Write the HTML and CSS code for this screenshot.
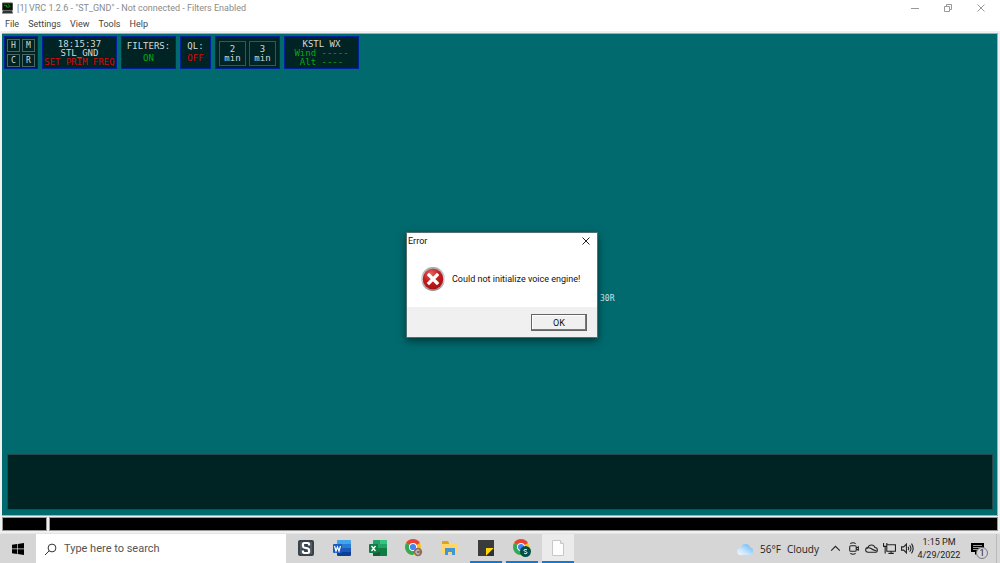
FILE: index.html
```html
<!DOCTYPE html>
<html lang="en">
<head>
<meta charset="utf-8">
<title>VRC 1.2.6</title>
<link rel="stylesheet" href="styles.css">
</head>
<body>
<header class="titlebar">
  <svg class="app-icon" viewBox="0 0 12 12"><rect width="12" height="9" rx="1" fill="#555"/><rect x="1" y="1" width="10" height="7" fill="#061006"/><path d="M2 3h3v2h3M7 2l2 3" stroke="#16a316" fill="none"/><path d="M1 9h10l1 3H0z" fill="#333"/></svg>
  <h1 class="title">[1] VRC 1.2.6 - "ST_GND" - Not connected - Filters Enabled</h1>
  <div class="window-controls">
    <button class="window-button" aria-label="Minimize"><svg viewBox="0 0 10 10"><path d="M1 5.500h8"/></svg></button>
    <button class="window-button" aria-label="Restore"><svg viewBox="0 0 10 10"><path d="M1.500 3.500h5v5h-5zM3.500 3V1.500h5v5H7"/></svg></button>
    <button class="window-button" aria-label="Close"><svg viewBox="0 0 10 10"><path d="M1.500 1.500l7 7M8.500 1.500l-7 7"/></svg></button>
  </div>
</header>
<nav class="menubar">
  <button class="menu">File</button>
  <button class="menu">Settings</button>
  <button class="menu">View</button>
  <button class="menu">Tools</button>
  <button class="menu">Help</button>
</nav>
<main class="scope">
  <div class="panels">
    <div class="panel keys">
      <button class="key">H</button><button class="key">M</button>
      <button class="key">C</button><button class="key">R</button>
    </div>
    <div class="panel station">
      <span>18:15:37</span><span>STL_GND</span><span class="red">SET PRIM FREQ</span>
    </div>
    <div class="panel filters"><span>FILTERS:</span><span class="green">ON</span></div>
    <div class="panel quick"><span>QL:</span><span class="red">OFF</span></div>
    <div class="panel timers">
      <button class="timer">2<br>min</button><button class="timer">3<br>min</button>
    </div>
    <div class="panel weather-panel">
      <span>KSTL WX</span><span class="green">Wind -----</span><span class="green">Alt ----</span>
    </div>
  </div>
  <span class="runway">30R</span>
  <div class="chat"></div>
</main>
<div class="status"><div class="status-cell"></div><div class="status-cell"></div></div>

<section class="dialog" role="dialog" aria-labelledby="dialog-title">
  <div class="dialog-head">
    <h2 class="dialog-title" id="dialog-title">Error</h2>
    <button class="dialog-close" aria-label="Close"><svg viewBox="0 0 10 10"><path d="M1.500 1.500l7 7M8.500 1.500l-7 7"/></svg></button>
  </div>
  <div class="dialog-body">
    <svg class="error-icon" viewBox="0 0 24 24">
      <defs><radialGradient id="red" cx=".4" cy=".25" r=".8"><stop offset="0" stop-color="#e2645e"/><stop offset=".5" stop-color="#c41d20"/><stop offset="1" stop-color="#a80d12"/></radialGradient>
      <linearGradient id="rim" x2="0" y2="1"><stop offset="0" stop-color="#a4a4a4"/><stop offset=".5" stop-color="#dcdcdc"/><stop offset="1" stop-color="#8c8c8c"/></linearGradient></defs>
      <circle cx="12" cy="12" r="11.900" fill="url(#rim)"/><circle cx="12" cy="12" r="10.300" fill="url(#red)"/>
      <path d="M8 8l8 8M16 8l-8 8" stroke="#fff" stroke-width="3.200" stroke-linecap="square"/>
    </svg>
    <p class="message">Could not initialize voice engine!</p>
  </div>
  <div class="dialog-foot"><button class="ok">OK</button></div>
</section>

<footer class="taskbar">
  <button class="start" aria-label="Start"><svg viewBox="0 0 12 12"><path d="M0 1.800l5-.7v4.500H0zM5.700 1L12 0v5.600H5.700zM0 6.300h5v4.600l-5-.7zM5.700 6.300H12V12l-6.300-1z"/></svg></button>
  <label class="search">
    <svg class="search-icon" viewBox="0 0 13 13"><circle cx="8" cy="5" r="3.900"/><path d="M5.200 7.800L1 12"/></svg>
    <input class="search-input" type="text" placeholder="Type here to search" aria-label="Search">
  </label>
  <div class="apps">
    <button class="app" aria-label="S app"><svg viewBox="0 0 16 16"><rect width="16" height="16" rx="2" fill="#39424a"/><path d="M3 2v12M13 2v12" stroke="#69747c"/><path d="M11 5.500V4q0-1-1-1H6Q5 3 5 4v2q0 1 1 1.500l4 1q1 .5 1 1.500v2q0 1-1 1H6q-1 0-1-1v-1.500" fill="none" stroke="#fff" stroke-width="2.200"/></svg></button>
    <button class="app" aria-label="Word"><svg viewBox="0 0 18 16"><path d="M5 0h12q1 0 1 1v3H4V1q0-1 1-1z" fill="#41a5ee"/><path d="M4 4h14v4H4z" fill="#2b7cd3"/><path d="M4 8h14v4H4z" fill="#185abd"/><path d="M4 12h14v3q0 1-1 1H5q-1 0-1-1z" fill="#103f91"/><rect y="4" width="9" height="9" rx="1" fill="#185abd"/><path d="M1.500 6l1.500 5 1.500-4L6 11l1.500-5" fill="none" stroke="#fff" stroke-width="1.200"/></svg></button>
    <button class="app" aria-label="Excel"><svg viewBox="0 0 18 16"><rect x="4" width="14" height="16" rx="1" fill="#21a366"/><path d="M11 0h6q1 0 1 1v3h-7z" fill="#33c481"/><path d="M4 8h14v7q0 1-1 1H5q-1 0-1-1z" fill="#107c41"/><path d="M4 12h7v4H5q-1 0-1-1z" fill="#185c37"/><rect y="4" width="9" height="9" rx="1" fill="#107c41"/><path d="M2.500 6l4 5M6.500 6l-4 5" stroke="#fff" stroke-width="1.300"/></svg></button>
    <button class="app chrome" aria-label="Chrome, profile C"><svg viewBox="0 0 18 18"><circle cx="8" cy="8" r="8" fill="#fbc116"/><path d="M8 8L1.100 4A8 8 0 0 1 14.900 4z" fill="#ea4335"/><path d="M8 8L1.100 4A8 8 0 0 0 8 16l3.500-6z" fill="#34a853"/><circle cx="8" cy="8" r="4" fill="#fff"/><circle cx="8" cy="8" r="3.100" fill="#4285f4"/><circle cx="13" cy="13" r="4.200" fill="#8d6e63"/><path d="M14.500 11.700a2 2 0 1 0 0 2.600" fill="none" stroke="#ddd"/></svg></button>
    <button class="app" aria-label="File Explorer"><svg viewBox="0 0 16 16"><path d="M0 2h6l1 2h9v10H0z" fill="#ffd667"/><path d="M0 1h6l1 2v1H0z" fill="#e0a21b"/><path d="M3 15V8h10v7h-3v-3H6v3z" fill="#3f96db"/></svg></button>
    <button class="app running" aria-label="Sticky Notes"><svg viewBox="0 0 16 16"><path d="M0 0h16v16H0z" fill="#3b3b3b"/><path d="M8 8h8l-8 8z" fill="#ffd60a"/><path d="M16 8v8H8z" fill="#303030"/></svg></button>
    <button class="app chrome running" aria-label="Chrome, profile S"><svg viewBox="0 0 18 18"><circle cx="8" cy="8" r="8" fill="#fbc116"/><path d="M8 8L1.100 4A8 8 0 0 1 14.900 4z" fill="#ea4335"/><path d="M8 8L1.100 4A8 8 0 0 0 8 16l3.500-6z" fill="#34a853"/><circle cx="8" cy="8" r="4" fill="#fff"/><circle cx="8" cy="8" r="3.100" fill="#4285f4"/><circle cx="12.500" cy="12.500" r="5.500" fill="#00504a"/><path d="M14 11c-1-1-3-.7-3 .4 0 1.300 3 .9 3 2.300 0 1.200-2 1.300-3 .3" fill="none" stroke="#fff"/></svg></button>
    <button class="app running active" aria-label="VRC"><svg viewBox="0 0 14 16"><path d="M1.500.5h8l3 3v12h-11z" fill="#fdfdfd" stroke="#c8c8c8"/><path d="M9.500.5v3h3" fill="#e8e8e8" stroke="#c8c8c8"/></svg></button>
  </div>
  <div class="tray">
    <button class="forecast">
      <svg class="cloud" viewBox="0 0 17 12"><defs><linearGradient id="sky" x1="1" y1="0" x2="0" y2="1"><stop offset="0" stop-color="#5eb0f2"/><stop offset=".6" stop-color="#c5e4fc"/><stop offset="1" stop-color="#f3faff"/></linearGradient></defs><path d="M4 12a3.500 3.500 0 0 1-.5-7A5 5 0 0 1 13 4.200 4 4 0 0 1 13 12z" fill="url(#sky)"/></svg>
      <span>56°F</span><span>Cloudy</span>
    </button>
    <div class="tray-icons">
      <button class="tray-button" aria-label="Show hidden icons"><svg viewBox="0 0 12 12"><path d="M2 8l4-4 4 4"/></svg></button>
      <button class="tray-button" aria-label="Meet Now"><svg viewBox="0 0 12 12"><rect x="2.500" y="3.500" width="6" height="5" rx="1"/><path d="M8.500 5.500l2-1v3l-2-1M3 1.500q2.500-1.500 5 0M3 10.500q2.500 1.500 5 0"/></svg></button>
      <button class="tray-button" aria-label="OneDrive"><svg viewBox="0 0 12 12"><path d="M3 9.500a2.200 2.200 0 0 1-.3-4.400 3.400 3.400 0 0 1 6.500 0 2.200 2.200 0 0 1 0 4.400z"/><path d="M1.500 6q2-1.500 4 0t5 2"/></svg></button>
      <button class="tray-button" aria-label="Network"><svg viewBox="0 0 12 12"><path d="M3.500 2.500h8v6h-8zM7.500 8.500v2M5 10.500h5M.5 1v3h3V1M2 4v6.500"/></svg></button>
      <button class="tray-button" aria-label="Volume"><svg viewBox="0 0 12 12"><path d="M.5 4.500h2L5 2v8L2.500 7.500h-2zM6.500 4.500q1.200 1.500 0 3M8 3q2.400 3 0 6M9.700 1.500q3 4.500 0 9"/></svg></button>
    </div>
    <button class="clock"><span>1:15 PM</span><span>4/29/2022</span></button>
    <button class="notifications" aria-label="1 notification">
      <svg viewBox="0 0 13 12"><path d="M0 0h13v9H7l-3 3V9H0z"/><path d="M2 2.500h9M2 4.500h9M2 6.500h6" stroke="#999"/></svg>
      <span class="badge">1</span>
    </button>
  </div>
</footer>
</body>
</html>
```
FILE: styles.css
```css
* { box-sizing: border-box; }

body {
  margin: 0;
  min-height: 100vh;
  display: flex;
  flex-direction: column;
  background: #f0f0f0;
  color: #222;
  font: 9px/12px Roboto, "Noto Sans", sans-serif;
}

button {
  margin: 0;
  padding: 0;
  border: 0;
  background: none;
  color: inherit;
  font: inherit;
}

svg { display: block; }
h1, h2, p { margin: 0; font-size: inherit; font-weight: normal; }

.titlebar {
  display: flex;
  align-items: center;
  gap: 4px;
  height: 17px;
  padding: 0 3px 1px 2px;
  background: #fff;
}
.app-icon { width: 11px; height: 12px; }
.title { flex: 1; color: #8a8a8a; }
.window-controls { display: flex; }
.window-button { display: grid; place-items: center; width: 33px; height: 15px; }
.window-controls svg { width: 10px; height: 10px; fill: none; stroke: #999; }

.menubar {
  display: flex;
  gap: 9px;
  height: 16px;
  padding: 1px 5px 3px;
  background: #fff;
  border-bottom: 2px solid #f0f0f0;
}
.menu { color: #444; line-height: 12px; }

.scope {
  position: relative;
  flex: 1;
  display: flex;
  flex-direction: column;
  justify-content: space-between;
  margin: 0 2px;
  padding: 2px 4px 5px 2px;
  border: 1px solid #8fb5b6;
  border-left-width: 0;
  background: #006a6e;
}
.panels {
  display: flex;
  gap: 4px;
  color: #d4dada;
  font: 9px/9px "DejaVu Sans Mono", "Liberation Mono", monospace;
}
.panel {
  display: flex;
  flex-direction: column;
  align-items: center;
  height: 33px;
  padding-top: 2px;
  border: 1px solid #00209c;
  background: #002324;
  white-space: nowrap;
}
.keys {
  display: grid;
  grid-template-columns: 13px 13px;
  grid-auto-rows: 13px;
  justify-content: center;
  gap: 2px;
  width: 34px;
}
.key { border: 1px solid #516464; line-height: 11px; font-size: 8px; }
.station { width: 75px; }
.station, .weather-panel { padding-top: 3px; }
.filters { width: 55px; }
.quick { width: 31px; }
.filters, .quick { gap: 3px; padding-top: 5px; }
.timers { flex-direction: row; justify-content: center; gap: 3px; width: 65px; }
.timer { width: 27px; height: 25px; border: 1px solid #087c10; }
.weather-panel { width: 75px; }
.red { color: #d80a0a; }
.green { color: #08a810; }

.runway {
  position: absolute;
  left: 598px;
  top: 260px;
  color: #d4e2e2;
  font: 8px/9px "DejaVu Sans Mono", monospace;
}
.chat {
  height: 56px;
  margin-left: 3px;
  border: 1px solid #29474a;
  background: #002324;
}

.status { display: flex; gap: 2px; padding: 1px 2px 2px; }
.status-cell { flex: 1; height: 14px; border: 1px solid #999; background: #000; }
.status-cell:first-child { flex: 0 0 45px; }

.dialog {
  position: absolute;
  left: 406px;
  top: 232px;
  width: 192px;
  border: 1px solid #536f70;
  background: #fff;
  box-shadow: 0 3px 8px rgba(0, 0, 0, .5);
  color: #111;
}
.dialog-head {
  display: flex;
  align-items: center;
  justify-content: space-between;
  height: 16px;
  padding: 0 6px 0 1px;
}
.dialog-close svg { width: 10px; height: 10px; fill: none; stroke: #222; }
.dialog-body {
  display: flex;
  align-items: center;
  gap: 7px;
  height: 58px;
  padding: 2px 14px 0;
}
.error-icon { flex: none; width: 24px; height: 24px; }
.message { white-space: nowrap; }
.dialog-foot {
  display: flex;
  justify-content: flex-end;
  padding: 7px 10px 6px;
  background: #f0f0f0;
}
.ok {
  width: 56px;
  height: 17px;
  border: 1px solid #646464;
  box-shadow: inset -1px -1px #777, inset 1px 1px #fff;
}

.taskbar {
  display: flex;
  height: 30px;
  border-top: 1px solid #e4e4e4;
  background: #d6d6d6;
}
.start { display: grid; place-items: center; width: 36px; }
.start svg { width: 12px; height: 12px; }
.search {
  display: flex;
  align-items: center;
  gap: 7px;
  width: 250px;
  padding: 1px 0 0 8px;
  background: #fff;
}
.search-icon { width: 13px; height: 13px; fill: none; stroke: #333; }
.search-input {
  flex: 1;
  min-width: 0;
  padding: 0;
  border: 0;
  outline: 0;
  background: none;
  font: 11px/16px Roboto, sans-serif;
}
.search-input::placeholder { color: #555; opacity: 1; }
.apps { display: flex; gap: 4px; padding-left: 4px; }
.app {
  display: grid;
  place-items: center;
  width: 32px;
  border-bottom: 2px solid transparent;
}
.app svg { height: 16px; max-width: 18px; }
.chrome svg { height: 18px; }
.running { border-bottom-color: #0f7bd6; }
.active { background: #ebebeb; }

.tray {
  display: flex;
  align-items: center;
  margin: 0 3px 0 auto;
  padding-right: 10px;
  border-right: 1px solid #bbb;
}
.forecast { display: flex; align-items: center; gap: 6px; font: 10px/12px "Open Sans", sans-serif; }
.cloud { width: 17px; height: 12px; }
.tray-icons { display: flex; gap: 5px; padding-left: 10px; }
.tray-button svg { width: 13px; height: 13px; fill: none; stroke: #222; }
.clock {
  display: flex;
  flex-direction: column;
  align-items: center;
  width: 50px;
  line-height: 13px;
}
.notifications { position: relative; width: 22px; padding-left: 7px; }
.notifications svg { width: 13px; height: 12px; }
.badge {
  position: absolute;
  left: 12px;
  top: 4px;
  width: 12px;
  height: 12px;
  border: 1px solid #777;
  border-radius: 50%;
  background: #d6d6d6;
  line-height: 10px;
}
```
